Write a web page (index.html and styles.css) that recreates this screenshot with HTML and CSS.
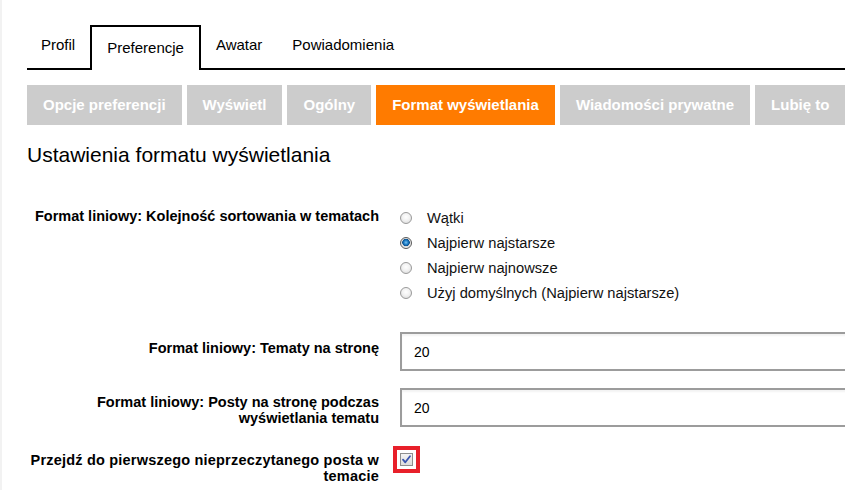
FILE: index.html
```html
<!DOCTYPE html>
<html lang="pl">
<head>
<meta charset="utf-8">
<title>Preferencje – Format wyświetlania</title>
<link rel="stylesheet" href="styles.css">
</head>
<body>
<div class="page">
  <nav class="tabs">
    <a class="tab" href="#">Profil</a>
    <a class="tab active" href="#">Preferencje</a>
    <a class="tab" href="#">Awatar</a>
    <a class="tab" href="#">Powiadomienia</a>
  </nav>

  <nav class="subnav">
    <a class="sub" href="#">Opcje preferencji</a>
    <a class="sub" href="#">Wyświetl</a>
    <a class="sub" href="#">Ogólny</a>
    <a class="sub current" href="#">Format wyświetlania</a>
    <a class="sub" href="#">Wiadomości prywatne</a>
    <a class="sub" href="#">Lubię to</a>
  </nav>

  <h2 class="title">Ustawienia formatu wyświetlania</h2>

  <form class="settings">
    <div class="row row-radio">
      <div class="lbl">Format liniowy: Kolejność sortowania w tematach</div>
      <div class="ctl radios">
        <label class="opt"><input type="radio" name="sort" class="radio"> Wątki</label>
        <label class="opt"><input type="radio" name="sort" class="radio" checked> Najpierw najstarsze</label>
        <label class="opt"><input type="radio" name="sort" class="radio"> Najpierw najnowsze</label>
        <label class="opt"><input type="radio" name="sort" class="radio"> Użyj domyślnych (Najpierw najstarsze)</label>
      </div>
    </div>

    <div class="row row-input">
      <label class="lbl lbl-input">Format liniowy: Tematy na stronę</label>
      <div class="ctl"><input class="text" type="text" value="20"></div>
    </div>

    <div class="row row-input row-last-input">
      <label class="lbl lbl-input2">Format liniowy: Posty na stronę podczas wyświetlania tematu</label>
      <div class="ctl"><input class="text" type="text" value="20"></div>
    </div>

    <div class="row">
      <label class="lbl lbl-wide">Przejdź do pierwszego nieprzeczytanego posta w temacie</label>
      <div class="ctl">
        <span class="checkbox" role="checkbox" aria-checked="true">
          <svg width="11" height="11" viewBox="0 0 11 11"><path d="M2 5.6 L4.3 8.3 L9 2.2" fill="none" stroke="#3a55b0" stroke-width="1.8" stroke-linecap="round" stroke-linejoin="round"/></svg>
        </span>
      </div>
    </div>
  </form>
</div>
</body>
</html>
```

FILE: styles.css
```css
html, body {
  margin: 0;
  padding: 0;
  background: #fff;
  overflow: hidden;
}

body {
  font-family: "Liberation Sans", Arial, sans-serif;
  color: #000;
  border-left: 2px solid #f2f2f2;
  min-height: 490px;
  box-sizing: border-box;
}

.page {
  padding-left: 25px;
}

/* Tabs */
.tabs {
  display: flex;
  align-items: flex-end;
  margin-top: 25px;
  border-bottom: 2px solid #000;
}

.tab {
  display: block;
  font-size: 15px;
  line-height: 18px;
  color: #000;
  text-decoration: none;
  padding: 0 15px 14px;
}

.tab:first-child {
  padding-left: 14px;
}

.tab.active {
  background: #fff;
  border: 2px solid #000;
  border-bottom: 0;
  padding: 12px 15px 13px;
  margin-bottom: -2px;
}

/* Sub navigation */
.subnav {
  display: flex;
  gap: 5px;
  margin-top: 15px;
}

.sub {
  display: block;
  height: 40px;
  line-height: 40px;
  padding: 0 16px;
  background: #cccccc;
  color: #fff;
  font-weight: bold;
  font-size: 15px;
  text-decoration: none;
  white-space: nowrap;
}

.sub.current {
  background: #ff7b00;
}

/* Title */
.title {
  margin: 18px 0 0;
  font-size: 21px;
  line-height: 24px;
  font-weight: normal;
}

/* Form */
.settings {
  margin-top: 38px;
  margin-left: -4px;
}

.row {
  display: grid;
  grid-template-columns: 356px 1fr;
  column-gap: 21px;
  align-items: start;
  margin-bottom: 17px;
}

.row-radio {
  margin-bottom: 27px;
}

.row-last-input {
  margin-bottom: 25px;
}

.lbl {
  text-align: right;
  font-weight: bold;
  font-size: 14.5px;
  line-height: 16px;
}

.lbl-wide {
  letter-spacing: 0.2px;
}

.row-radio .lbl {
  padding-top: 3px;
}

.lbl-input {
  padding-top: 8px;
}

.lbl-input2 {
  padding-top: 6px;
}

.radios {
  display: flex;
  flex-direction: column;
}

.opt {
  display: flex;
  align-items: center;
  height: 25px;
  font-size: 14.7px;
  color: #111;
}

.radio {
  appearance: none;
  -webkit-appearance: none;
  margin: 0 15px 0 0;
  width: 12px;
  height: 12px;
  border-radius: 50%;
  border: 1px solid #9a9a9a;
  background: radial-gradient(circle at 50% 40%, #ffffff 0, #f2f2f2 45%, #d4d4d4 100%);
  box-sizing: border-box;
}

.radio:checked {
  border-color: #5a5a5a;
  background: radial-gradient(circle at 50% 45%, #7cc4f0 0, #1f7fc8 2px, #0b4f8c 3.5px, #d9d9d9 4px, #f4f4f4 5.5px);
}

.text {
  display: block;
  box-sizing: border-box;
  width: 470px;
  height: 39px;
  margin: 0;
  border: 2px solid #9c9c9c;
  padding: 0 12px;
  font-family: "Liberation Sans", Arial, sans-serif;
  font-size: 14px;
  color: #000;
  background: #fff;
  box-shadow: inset 0 2px 2px rgba(0, 0, 0, 0.05);
  outline: none;
}

.checkbox {
  display: flex;
  align-items: center;
  justify-content: center;
  box-sizing: border-box;
  width: 13px;
  height: 13px;
  margin-top: 1px;
  border: 1px solid #8e8f8f;
  background: linear-gradient(#f4f4f4, #dcdcdc);
  outline: 4px solid #e8202a;
  outline-offset: 3px;
}

.checkbox svg {
  display: block;
}
```
